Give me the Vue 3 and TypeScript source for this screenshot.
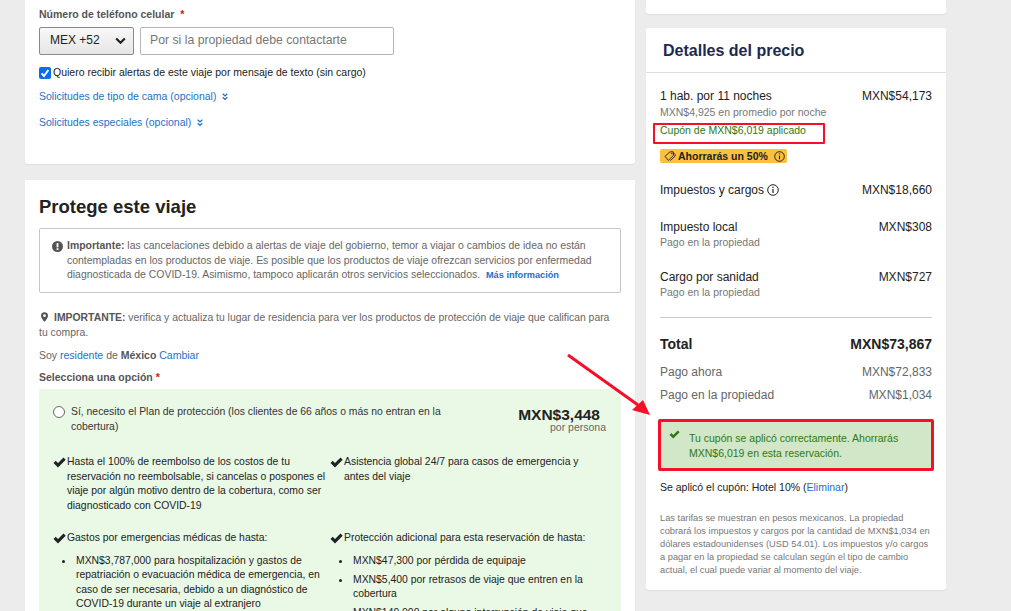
<script setup lang="ts">
interface Fee {
  label: string
  note: string
  amount: string
}

const fees: Fee[] = [
  { label: 'Impuesto local', note: 'Pago en la propiedad', amount: 'MXN$308' },
  { label: 'Cargo por sanidad', note: 'Pago en la propiedad', amount: 'MXN$727' }
]

const medical = [
  'MXN$3,787,000 para hospitalización y gastos de repatriación o evacuación médica de emergencia, en caso de ser necesaria, debido a un diagnóstico de COVID-19 durante un viaje al extranjero'
]

const extras = [
  'MXN$47,300 por pérdida de equipaje',
  'MXN$5,400 por retrasos de viaje que entren en la cobertura',
  'MXN$149,000 por alguna interrupción de viaje que entre en la cobertura'
]

const checkPath = 'M.5 6 2.7 3.8 5 6.1 10.5.6l2.2 2.2L5 10.500z'
</script>

<template>
  <div class="page">
    <div class="left">
      <section class="card contact">
        <div class="field-label">Número de teléfono celular <span class="req">&nbsp;*</span></div>
        <div class="phone">
          <div class="select">
            <span>MEX +52</span>
            <svg width="11" height="8" viewBox="0 0 11 8"><path d="M1.2 1.5 5.5 5.8 9.8 1.5" fill="none" stroke="#222" stroke-width="2.2" /></svg>
          </div>
          <div class="input">Por si la propiedad debe contactarte</div>
        </div>
        <div class="check-row">
          <span class="checkbox">
            <svg width="12" height="12" viewBox="0 0 12 12"><path d="M2.6 6.4 5 9l4.4-6" fill="none" stroke="#fff" stroke-width="2" /></svg>
          </span>
          Quiero recibir alertas de este viaje por mensaje de texto (sin cargo)
        </div>
        <div class="toggle first">
          <a>Solicitudes de tipo de cama (opcional)</a>
          <svg width="6" height="8" viewBox="0 0 6 8"><path d="M.7.8 3 3l2.3-2.2M.7 4.3 3 6.5l2.3-2.2" fill="none" stroke="#1f6fc4" stroke-width="1.2" /></svg>
        </div>
        <div class="toggle">
          <a>Solicitudes especiales (opcional)</a>
          <svg width="6" height="8" viewBox="0 0 6 8"><path d="M.7.8 3 3l2.3-2.2M.7 4.3 3 6.5l2.3-2.2" fill="none" stroke="#1f6fc4" stroke-width="1.2" /></svg>
        </div>
      </section>

      <section class="card protect">
        <h2>Protege este viaje</h2>
        <div class="notice">
          <svg class="notice-icon" width="11" height="11" viewBox="0 0 11 11">
            <circle cx="5.5" cy="5.5" r="5.5" fill="#555" />
            <rect x="4.6" y="2" width="1.8" height="4.4" fill="#fff" />
            <rect x="4.6" y="7.2" width="1.8" height="1.8" fill="#fff" />
          </svg>
          <p>
            <b>Importante:</b> las cancelaciones debido a alertas de viaje del gobierno, temor a viajar o cambios de idea no están contempladas en los productos de viaje. Es posible que los productos de viaje ofrezcan servicios por enfermedad diagnosticada de COVID-19. Asimismo, tampoco aplicarán otros servicios seleccionados.
            <a class="more">Más información</a>
          </p>
        </div>
        <p class="residence">
          <svg class="pin" width="7" height="10" viewBox="0 0 8 11"><path fill-rule="evenodd" d="M4 0a4 4 0 0 1 4 4c0 2.5-2.6 5.4-4 7-1.4-1.6-4-4.500-4-7a4 4 0 0 1 4-4zm0 2.400a1.600 1.600 0 1 0 0 3.200 1.600 1.600 0 0 0 0-3.200z" fill="#555" /></svg>
          <b>IMPORTANTE:</b> verifica y actualiza tu lugar de residencia para ver los productos de protección de viaje que califican para tu compra.
        </p>
        <p class="resident">Soy <a>residente</a> de <b>México</b> <a>Cambiar</a></p>
        <div class="field-label option-label">Selecciona una opción<span class="req"> *</span></div>

        <div class="plan">
          <div class="plan-head">
            <span class="radio"></span>
            <p class="plan-title">Sí, necesito el Plan de protección (los clientes de 66 años o más no entran en la cobertura)</p>
            <div class="plan-price">
              <strong>MXN$3,448</strong>
              <span>por persona</span>
            </div>
          </div>
          <div class="benefits">
            <div class="benefit">
              <svg width="13" height="11" viewBox="0 0 13 11"><path :d="checkPath" fill="#222" /></svg>
              <div>Hasta el 100% de reembolso de los costos de tu reservación no reembolsable, si cancelas o pospones el viaje por algún motivo dentro de la cobertura, como ser diagnosticado con COVID-19</div>
            </div>
            <div class="benefit">
              <svg width="13" height="11" viewBox="0 0 13 11"><path :d="checkPath" fill="#222" /></svg>
              <div>Asistencia global 24/7 para casos de emergencia y antes del viaje</div>
            </div>
            <div class="benefit">
              <svg width="13" height="11" viewBox="0 0 13 11"><path :d="checkPath" fill="#222" /></svg>
              <div>
                Gastos por emergencias médicas de hasta:
                <ul>
                  <li v-for="item in medical" :key="item">{{ item }}</li>
                </ul>
              </div>
            </div>
            <div class="benefit">
              <svg width="13" height="11" viewBox="0 0 13 11"><path :d="checkPath" fill="#222" /></svg>
              <div>
                Protección adicional para esta reservación de hasta:
                <ul>
                  <li v-for="item in extras" :key="item">{{ item }}</li>
                </ul>
              </div>
            </div>
          </div>
        </div>
      </section>
    </div>

    <div class="right">
      <section class="card stub"></section>
      <section class="card price">
        <h3>Detalles del precio</h3>
        <div class="price-body">
          <div class="row"><span>1 hab. por 11 noches</span><span>MXN$54,173</span></div>
          <div class="note">MXN$4,925 en promedio por noche</div>
          <div class="coupon">Cupón de MXN$6,019 aplicado</div>
          <div class="badge">
            <svg width="12" height="12" viewBox="0 0 13 12"><path d="M1 6.500 6.500 1.500h3.700v3.800L4.800 10.800zM10.800 3l1.200 1.200v2L6.800 11" fill="none" stroke="#222" stroke-width="1" /><circle cx="8.500" cy="3.300" r=".8" fill="#222" /></svg>
            <b>Ahorrarás un 50%</b>
            <svg width="11" height="11" viewBox="0 0 11 11"><circle cx="5.500" cy="5.500" r="4.800" fill="none" stroke="#222" /><path d="M5.500 4.700v3.600M5.500 2.500v1.100" stroke="#222" stroke-width="1.100" /></svg>
          </div>
          <div class="row taxes">
            <span class="with-icon">Impuestos y cargos
              <svg width="12" height="12" viewBox="0 0 12 12"><circle cx="6" cy="6" r="5.300" fill="none" stroke="#222" /><path d="M6 5v4M6 2.700v1.200" stroke="#222" stroke-width="1.200" /></svg>
            </span>
            <span>MXN$18,660</span>
          </div>
          <div v-for="fee in fees" :key="fee.label" class="fee">
            <div class="row"><span>{{ fee.label }}</span><span>{{ fee.amount }}</span></div>
            <div class="note fee-note">{{ fee.note }}</div>
          </div>
          <div class="total-block">
            <div class="row total"><span>Total</span><span>MXN$73,867</span></div>
            <div class="row muted pay-now"><span>Pago ahora</span><span>MXN$72,833</span></div>
            <div class="row muted"><span>Pago en la propiedad</span><span>MXN$1,034</span></div>
          </div>
          <div class="success">
            <svg width="11" height="9" viewBox="0 0 13 11"><path :d="checkPath" fill="#2f7a12" /></svg>
            <p>Tu cupón se aplicó correctamente. Ahorrarás MXN$6,019 en esta reservación.</p>
          </div>
          <p class="applied">Se aplicó el cupón: Hotel 10% (<a>Eliminar</a>)</p>
          <p class="fine">Las tarifas se muestran en pesos mexicanos. La propiedad cobrará los impuestos y cargos por la cantidad de MXN$1,034 en dólares estadounidenses (USD 54.01). Los impuestos y/o cargos a pagar en la propiedad se calculan según el tipo de cambio actual, el cual puede variar al momento del viaje.</p>
        </div>
      </section>
    </div>

    <!-- annotations drawn on top of the screenshot -->
    <div class="mark-coupon"></div>
    <svg class="arrow" width="100" height="80" viewBox="0 0 100 80">
      <path d="M6 5 76 55" stroke="#f5102a" stroke-width="3" />
      <path d="M88 65 70 60 81 50z" fill="#f5102a" />
    </svg>
  </div>
</template>

<style>
html,
body {
  margin: 0;
  background: #ececec;
}
</style>

<style scoped>
.page {
  position: relative;
  display: flex;
  gap: 11px;
  width: 1011px;
  height: 611px;
  padding-left: 25px;
  box-sizing: border-box;
  overflow: hidden;
  background: #ececec;
  color: #222;
  font-family: "Liberation Sans", Arial, sans-serif;
  font-size: 11px;
  line-height: 14.5px;
}
p,
h2,
h3,
ul {
  margin: 0;
}
a {
  color: #1f6fc4;
}
.left {
  width: 610px;
  display: flex;
  flex-direction: column;
  gap: 16px;
}
.right {
  width: 300px;
  display: flex;
  flex-direction: column;
  gap: 14px;
}
.card {
  background: #fff;
  border-radius: 0 0 3px 3px;
  box-shadow: 0 1px 1px rgba(0, 0, 0, 0.06);
}
.contact {
  flex: none;
  height: 164px;
  padding: 7px 14px 0;
  box-sizing: border-box;
}
.field-label {
  font-weight: bold;
  font-size: 10.5px;
  color: #555;
}
.req {
  color: #d3121f;
}
.phone {
  display: flex;
  gap: 6px;
  margin-top: 5px;
}
.select {
  width: 95px;
  height: 28px;
  box-sizing: border-box;
  display: flex;
  align-items: center;
  justify-content: space-between;
  padding: 0 7px 0 10px;
  border: 1px solid #8a8a8a;
  border-radius: 2px;
  background: linear-gradient(#f8f8f8, #e6e6e6);
  font-size: 12px;
}
.input {
  width: 254px;
  height: 28px;
  box-sizing: border-box;
  display: flex;
  align-items: center;
  padding-left: 9px;
  border: 1px solid #b5b5b5;
  border-radius: 2px;
  color: #777;
  font-size: 12.25px;
}
.check-row {
  display: flex;
  align-items: center;
  gap: 2px;
  margin-top: 11px;
  height: 14px;
  font-size: 10.5px;
}
.checkbox {
  width: 12px;
  height: 12px;
  border-radius: 2px;
  background: #0b6ee8;
  display: flex;
}
.toggle {
  display: flex;
  align-items: center;
  gap: 6px;
  margin-top: 12px;
  height: 14px;
  color: #1f6fc4;
  font-size: 10.5px;
}
.toggle.first {
  margin-top: 10px;
}
.protect {
  flex: 1;
  border-radius: 0;
  padding: 16px 14px 0;
}
h2 {
  font-size: 18.5px;
  line-height: 22px;
  color: #222;
}
.notice {
  position: relative;
  margin-top: 10px;
  height: 65px;
  box-sizing: border-box;
  padding: 10px 12px 0 27px;
  border: 1px solid #c6c6c6;
  border-radius: 2px;
  color: #666;
  font-size: 10.45px;
}
.notice b {
  color: #555;
}
.notice-icon {
  position: absolute;
  left: 12px;
  top: 12px;
}
.more {
  font-size: 9.2px;
  font-weight: bold;
  margin-left: 3px;
}
.residence {
  margin-top: 18px;
  padding-right: 6px;
  color: #666;
  font-size: 10.4px;
}
.residence b,
.resident b {
  color: #555;
}
.pin {
  margin: 0 6px 0 2px;
  vertical-align: -1px;
}
.resident {
  margin-top: 8px;
  color: #666;
  font-size: 10.5px;
}
.option-label {
  margin-top: 7px;
}
.plan {
  margin-top: 5px;
  width: 582px;
  height: 300px;
  background: #eaf9e6;
  padding: 16px 14px 0;
  box-sizing: border-box;
  font-size: 10.4px;
}
.plan-head {
  display: flex;
  align-items: flex-start;
}
.radio {
  flex: none;
  width: 12px;
  height: 12px;
  border: 1px solid #666;
  border-radius: 50%;
  background: #fff;
  box-sizing: border-box;
  margin-top: 1px;
}
.plan-title {
  width: 390px;
  margin-left: 6px;
  color: #333;
}
.plan-price {
  margin-left: auto;
  margin-right: 1px;
  display: flex;
  flex-direction: column;
  align-items: flex-end;
  padding-top: 2px;
  line-height: 11px;
}
.plan-price strong {
  font-size: 15.5px;
  line-height: 15px;
  margin-right: 6px;
  color: #222;
}
.plan-price span {
  color: #666;
  font-size: 10.5px;
}
.benefits {
  margin-top: 21px;
  display: grid;
  grid-template-columns: 277px 1fr;
  row-gap: 18px;
  padding-right: 3px;
}
.benefit {
  display: flex;
  gap: 1px;
  color: #222;
}
.benefit svg {
  flex: none;
  margin-top: 2px;
}
ul {
  padding-left: 9px;
  margin-top: 8px;
  list-style: none;
}
li {
  position: relative;
  margin-bottom: 4.5px;
}
li::before {
  content: "";
  position: absolute;
  left: -14px;
  top: 6px;
  width: 3px;
  height: 3px;
  border-radius: 50%;
  background: #222;
}
.stub {
  height: 14px;
  flex: none;
}
.price {
  height: 562px;
  flex: none;
  border-radius: 3px;
}
h3 {
  height: 45px;
  box-sizing: border-box;
  padding: 14px 0 0 17px;
  border-bottom: 1px solid #dedede;
  font-size: 16px;
  line-height: 18px;
  color: #1d2a4e;
}
.price-body {
  padding: 15px 14px 0;
  font-size: 12px;
}
.row {
  display: flex;
  justify-content: space-between;
  line-height: 16px;
  color: #222;
}
.note {
  font-size: 10.5px;
  line-height: 14px;
  margin-top: 1px;
  color: #777;
}
.fee-note {
  margin-top: 0;
}
.coupon {
  margin-top: 4px;
  font-size: 10.5px;
  line-height: 14px;
  color: #2f7a12;
}
.badge {
  display: inline-flex;
  align-items: center;
  gap: 2px;
  height: 14px;
  margin-top: 12px;
  padding: 0 2px 0 4px;
  border-radius: 2px;
  background: #fcc03f;
  font-size: 10.5px;
}
.badge svg:last-child {
  margin-left: 4px;
}
.taxes {
  margin-top: 16px;
}
.with-icon {
  display: inline-flex;
  align-items: center;
  gap: 3px;
}
.fee {
  margin-top: 21px;
}
.fee + .fee {
  margin-top: 20px;
}
.total-block {
  margin-top: 18px;
  padding-top: 18px;
  border-top: 1px solid #c9c9c9;
}
.total {
  font-size: 14px;
  font-weight: bold;
}
.muted span {
  color: #666;
}
.pay-now {
  margin-top: 12px;
  margin-bottom: 7px;
}
.success {
  display: flex;
  gap: 9px;
  width: 276px;
  height: 52px;
  margin: 16px 0 0 -2px;
  padding: 9px 8px 0 8px;
  box-sizing: border-box;
  background: #d2e6c8;
  border: 3px solid #f5102a;
  border-radius: 2px;
  color: #2f7a12;
  font-size: 10.5px;
  line-height: 15px;
}
.success svg {
  flex: none;
  margin-top: -1px;
}
.applied {
  margin-top: 9px;
  font-size: 10.5px;
  color: #222;
}
.fine {
  margin-top: 18px;
  font-size: 9.3px;
  line-height: 13px;
  color: #777;
}
.mark-coupon {
  position: absolute;
  left: 653px;
  top: 123px;
  width: 172px;
  height: 21px;
  box-sizing: border-box;
  border: 2.5px solid #f5102a;
  border-radius: 1px;
}
.arrow {
  position: absolute;
  left: 562px;
  top: 350px;
}
</style>
